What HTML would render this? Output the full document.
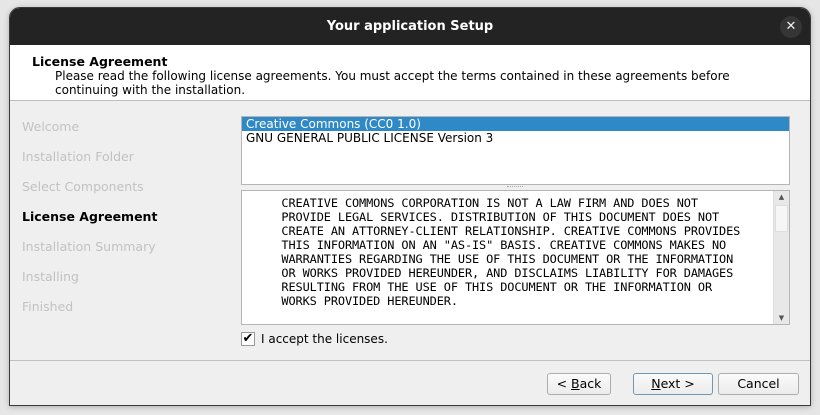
<!DOCTYPE html>
<html><head><style>
*{margin:0;padding:0;box-sizing:border-box}
body{width:820px;height:415px;background:#e6e6e6;position:relative;overflow:hidden;font-family:"DejaVu Sans","Liberation Sans",sans-serif;font-size:12px;color:#000}
.win{position:absolute;left:9px;top:7px;width:802px;height:399px;border:1px solid #3a3a3a;border-radius:11px 11px 0 0;background:#efefef;overflow:hidden;box-shadow:0 1px 6px rgba(0,0,0,.25)}
.title{position:absolute;left:0;top:0;width:100%;height:37px;background:#232323;color:#fff;font-weight:bold;font-size:13px;text-align:center;line-height:37px}
.close{position:absolute;right:8px;top:8px;width:22px;height:22px;border-radius:50%;background:#353535;color:#eee;font-size:13px;line-height:22px;text-align:center;font-weight:normal}
.hdr{position:absolute;left:0;top:37px;width:100%;height:56px;background:#fff;border-bottom:1px solid #bdbdbd}
.hdr b{position:absolute;left:22px;top:9px;font-size:12.5px}
.hdr p{position:absolute;left:45px;top:24px;width:700px;line-height:14px;font-size:12px}
.nav{position:absolute;left:12px;font-size:12.5px;color:#c2c2c2}
.list{position:absolute;left:231px;top:108px;width:549px;height:69px;background:#fff;border:1px solid #b5b5b5}
.list div{height:14px;line-height:14px;padding-left:4px;font-size:12px}
.sel{background:#3089c7;color:#fff}
.txt{position:absolute;left:231px;top:182px;width:549px;height:135px;background:#fff;border:1px solid #b5b5b5;overflow:hidden}
.txt pre{position:absolute;left:-10px;top:5px;font-family:"DejaVu Sans Mono","Liberation Mono",monospace;font-size:11.9px;line-height:14px;letter-spacing:-0.1px}
.sb{position:absolute;right:0;top:0;width:16px;height:100%;background:#e8e8e8;border-left:1px solid #ddd}
.thumb{position:absolute;left:1px;top:14px;width:13px;height:27px;background:#f6f6f6;border:1px solid #ddd}
.dots{position:absolute;left:497px;top:178px;width:16px;border-top:1px dotted #aaa}
.cb{position:absolute;left:231px;top:324px;width:14px;height:14px;border:1px solid #999;background:#fff;font-size:13px;line-height:12px;text-align:center;font-weight:bold}
.cbl{position:absolute;left:251px;top:324px;font-size:12px}
.sep{position:absolute;left:0;top:352px;width:100%;border-top:1px solid #c0c0c0}
.btn{position:absolute;top:365px;height:22px;border:1px solid #adadad;border-radius:3px;background:linear-gradient(#fafafa,#ececec);text-align:center;line-height:20px;font-size:12.5px}
</style></head><body>
<div class="win">
<div class="title">Your application Setup<div class="close">✕</div></div>
<div class="hdr"><b>License Agreement</b><p>Please read the following license agreements. You must accept the terms contained in these agreements before continuing with the installation.</p></div>
<div class="nav" style="top:111px">Welcome</div>
<div class="nav" style="top:141px">Installation Folder</div>
<div class="nav" style="top:171px">Select Components</div>
<div class="nav" style="top:201px;color:#000;font-weight:bold">License Agreement</div>
<div class="nav" style="top:231px">Installation Summary</div>
<div class="nav" style="top:261px">Installing</div>
<div class="nav" style="top:291px">Finished</div>
<div class="list"><div class="sel">Creative Commons (CC0 1.0)</div><div>GNU GENERAL PUBLIC LICENSE Version 3</div></div>
<div class="dots"></div>
<div class="txt"><pre>       CREATIVE COMMONS CORPORATION IS NOT A LAW FIRM AND DOES NOT
       PROVIDE LEGAL SERVICES. DISTRIBUTION OF THIS DOCUMENT DOES NOT
       CREATE AN ATTORNEY-CLIENT RELATIONSHIP. CREATIVE COMMONS PROVIDES
       THIS INFORMATION ON AN "AS-IS" BASIS. CREATIVE COMMONS MAKES NO
       WARRANTIES REGARDING THE USE OF THIS DOCUMENT OR THE INFORMATION
       OR WORKS PROVIDED HEREUNDER, AND DISCLAIMS LIABILITY FOR DAMAGES
       RESULTING FROM THE USE OF THIS DOCUMENT OR THE INFORMATION OR
       WORKS PROVIDED HEREUNDER.

  Statement of Purpose</pre>
<div class="sb"><div style="font-size:7px;color:#555;text-align:center;line-height:12px">▲</div><div class="thumb"></div><div style="position:absolute;bottom:0;width:100%;font-size:7px;color:#555;text-align:center;line-height:12px">▼</div></div></div>
<div class="cb">✔</div><div class="cbl">I accept the licenses.</div>
<div class="sep"></div>
<div class="btn" style="left:537px;width:64px">&lt; <u>B</u>ack</div>
<div class="btn" style="left:623px;width:80px;border-color:#6f97b8"><u>N</u>ext &gt;</div>
<div class="btn" style="left:708px;width:81px">Cancel</div>
</div>
</body></html>
